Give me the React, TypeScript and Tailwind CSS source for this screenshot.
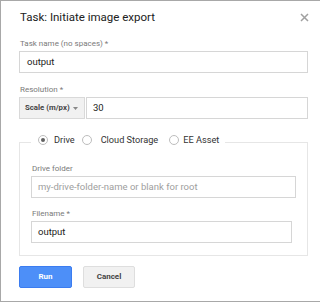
import React from "react";

const font = { fontFamily: "Roboto, 'Noto Sans', Arial, sans-serif" };

function Radio({ checked, label, gap }: { checked?: boolean; label: string; gap: string }) {
  return (
    <span className="flex items-center">
      <span className="flex h-[10px] w-[10px] items-center justify-center rounded-full border border-[#bdbdbd] bg-white">
        {checked && <span className="h-[4px] w-[4px] rounded-full bg-[#616161]" />}
      </span>
      <span className={`${gap} text-[9.2px] leading-[11px] text-[#333]`}>{label}</span>
    </span>
  );
}

export default function App() {
  return (
    <div style={font} className="w-[330px] bg-white">
      <div className="flex h-[302px] flex-col border-l border-t border-b border-[#a8a8a8] pl-[18px] pt-[8px]">
        <div className="flex w-[289px] items-start justify-between">
          <div className="pl-[1px] text-[11.5px] leading-[16px] text-[#212121]">Task: Initiate image export</div>
          <svg width="9" height="9" viewBox="0 0 9 9" className="mr-[-1px] mt-[4px]">
            <path d="M1 1 L8 8 M8 1 L1 8" stroke="#a0a0a0" strokeWidth="1.5" />
          </svg>
        </div>

        <div className="mt-[14px] mb-[2px] pl-[1px] text-[8px] leading-[10px] text-[#7a7a7a]">Task name (no spaces) *</div>
        <div className="flex h-[22px] w-[289px] items-center border border-[#d6d6d6] pl-[7px] text-[9.5px] text-[#222]">output</div>

        <div className="mt-[12px] mb-[2px] pl-[1px] text-[8px] leading-[10px] text-[#7a7a7a]">Resolution *</div>
        <div className="flex w-[289px] gap-[1px]">
          <div className="flex h-[22px] w-[66px] items-center border border-[#d9d9d9] bg-[#f1f1f1] pl-[5px]">
            <span className="text-[7.8px] font-bold text-[#444]">Scale (m/px)</span>
            <svg width="5" height="3" viewBox="0 0 5 3" className="ml-[3px]">
              <path d="M0 0 L5 0 L2.5 3 Z" fill="#888" />
            </svg>
          </div>
          <div className="flex h-[22px] flex-1 items-center border border-[#d6d6d6] pl-[6px] text-[9.5px] text-[#222]">30</div>
        </div>

        <fieldset className="mt-[15px] w-[289px] border border-[#e6e6e6] px-[11px] pt-[13px] pb-[12px]">
          <legend className="flex items-center pl-[7px] pr-[6px] pb-[6px]">
            <Radio checked label="Drive" gap="ml-[6px]" />
            <span className="w-[7px]" />
            <Radio label="Cloud Storage" gap="ml-[9px]" />
            <span className="w-[11px]" />
            <Radio label="EE Asset" gap="ml-[4px]" />
          </legend>
          <div className="mb-[2px] pl-[1px] text-[8px] leading-[10px] text-[#7a7a7a]">Drive folder</div>
          <div className="flex h-[22px] w-[265px] items-center border border-[#d6d6d6] pl-[6px] text-[9.5px] text-[#9e9e9e]">
            my-drive-folder-name or blank for root
          </div>
          <div className="mt-[11px] mb-[2px] pl-[1px] text-[8px] leading-[10px] text-[#7a7a7a]">Filename *</div>
          <div className="flex h-[22px] w-[261px] items-center border border-[#d6d6d6] pl-[6px] text-[9.5px] text-[#222]">output</div>
        </fieldset>

        <div className="mt-[10px] flex gap-[11px]">
          <div className="flex h-[22px] w-[53px] items-center justify-center rounded-[2px] border border-[#3b7cf0] bg-[#4d8ff8] text-[8px] font-bold text-white">
            Run
          </div>
          <div className="flex h-[22px] w-[52px] items-center justify-center rounded-[2px] border border-[#dedede] bg-[#f1f1f1] text-[8px] font-bold text-[#444]">
            Cancel
          </div>
        </div>
      </div>
    </div>
  );
}
